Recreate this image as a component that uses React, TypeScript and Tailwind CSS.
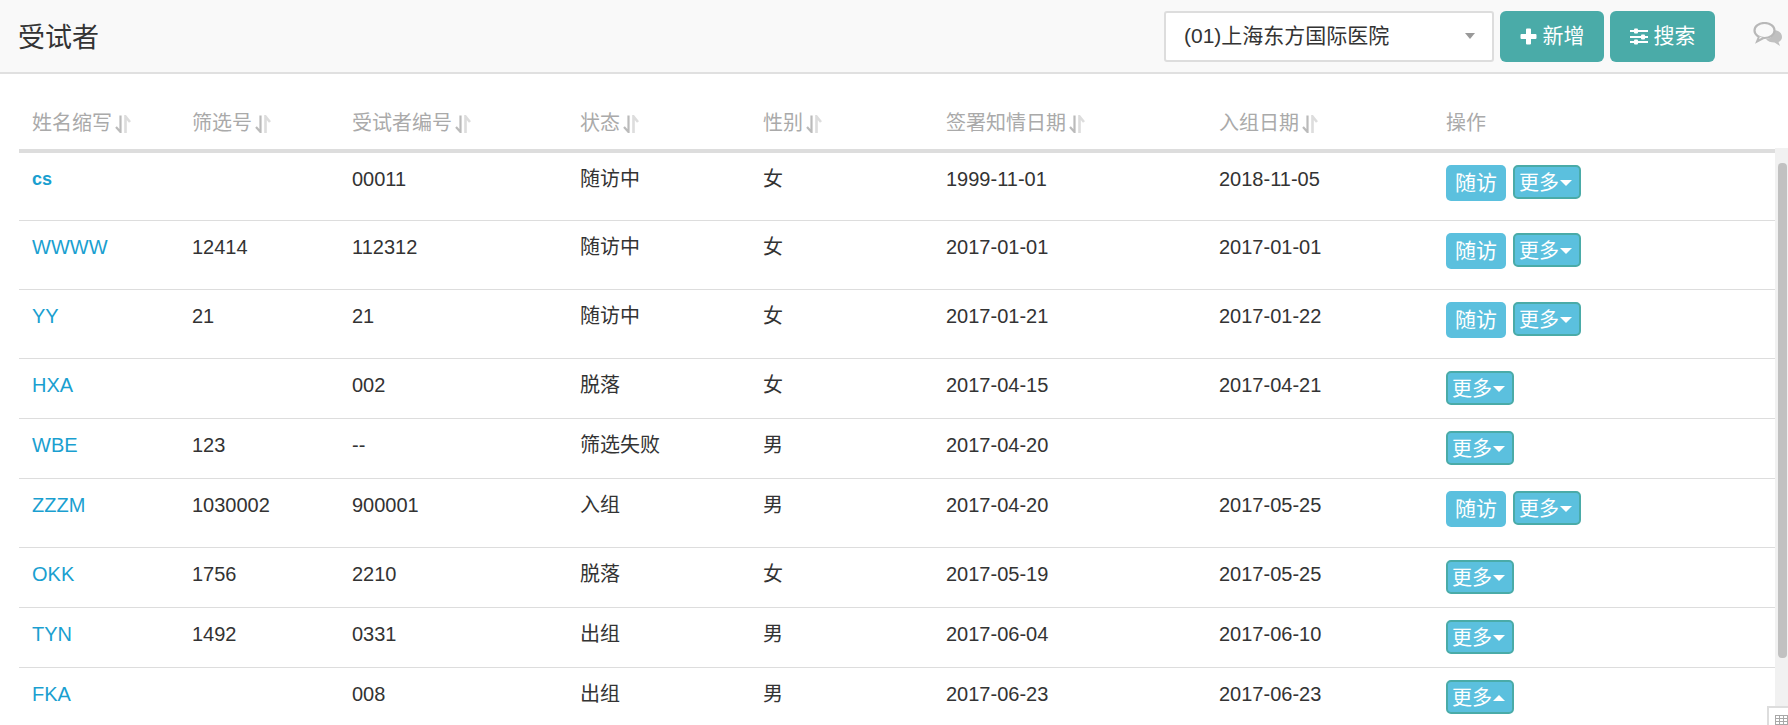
import React from "react";

function Sort() {
  return (
    <svg width="16" height="18" viewBox="0 0 16 18" className="ml-[3px] inline-block align-[-3px]">
      <path d="M5.500 0.500V17L1 12" stroke="#bbbbbb" strokeWidth="2.200" fill="none" />
      <path d="M10.500 18V1.500L15 7" stroke="#dddddd" strokeWidth="2.600" fill="none" />
    </svg>
  );
}

function Caret({ up }: { up?: boolean }) {
  return (
    <span
      className={
        up
          ? "inline-block w-0 h-0 ml-px border-x-[6px] border-x-transparent border-b-[6px] border-b-white"
          : "inline-block w-0 h-0 ml-px border-x-[6px] border-x-transparent border-t-[6px] border-t-white"
      }
    />
  );
}

type Row = {
  name: string;
  no: string;
  code: string;
  status: string;
  sex: string;
  sign: string;
  enroll: string;
  visit: boolean;
  up?: boolean;
  h: string;
};

const rows: Row[] = [
  { name: "cs", no: "", code: "00011", status: "随访中", sex: "女", sign: "1999-11-01", enroll: "2018-11-05", visit: true, h: "h-[69px]" },
  { name: "WWWW", no: "12414", code: "112312", status: "随访中", sex: "女", sign: "2017-01-01", enroll: "2017-01-01", visit: true, h: "h-[69px]" },
  { name: "YY", no: "21", code: "21", status: "随访中", sex: "女", sign: "2017-01-21", enroll: "2017-01-22", visit: true, h: "h-[69px]" },
  { name: "HXA", no: "", code: "002", status: "脱落", sex: "女", sign: "2017-04-15", enroll: "2017-04-21", visit: false, h: "h-[60px]" },
  { name: "WBE", no: "123", code: "--", status: "筛选失败", sex: "男", sign: "2017-04-20", enroll: "", visit: false, h: "h-[60px]" },
  { name: "ZZZM", no: "1030002", code: "900001", status: "入组", sex: "男", sign: "2017-04-20", enroll: "2017-05-25", visit: true, h: "h-[69px]" },
  { name: "OKK", no: "1756", code: "2210", status: "脱落", sex: "女", sign: "2017-05-19", enroll: "2017-05-25", visit: false, h: "h-[60px]" },
  { name: "TYN", no: "1492", code: "0331", status: "出组", sex: "男", sign: "2017-06-04", enroll: "2017-06-10", visit: false, h: "h-[60px]" },
  { name: "FKA", no: "", code: "008", status: "出组", sex: "男", sign: "2017-06-23", enroll: "2017-06-23", visit: false, up: true, h: "h-[60px]" },
];

const heads = [
  ["姓名缩写", "w-[160px]"],
  ["筛选号", "w-[160px]"],
  ["受试者编号", "w-[228px]"],
  ["状态", "w-[183px]"],
  ["性别", "w-[183px]"],
  ["签署知情日期", "w-[273px]"],
  ["入组日期", "w-[227px]"],
];

export default function App() {
  return (
    <div className="relative h-[725px] w-[1788px] overflow-hidden bg-white text-[20px] text-[#333] font-['Liberation_Sans','Noto_Sans_CJK_SC',sans-serif]">
      <header className="flex h-[74px] items-center border-b-2 border-[#e0e0e0] bg-[#f9f9f9] pl-[18px]">
        <h1 className="flex-1 pt-[5px] text-[27px] font-normal text-[#333]">受试者</h1>
        <div className="flex h-[51px] w-[330px] items-center justify-between rounded-[3px] border-2 border-[#ddd] bg-white pl-[18px] pr-[17px] text-[21px]">
          <span>(01)上海东方国际医院</span>
          <span className="h-0 w-0 border-x-[5px] border-t-[6px] border-x-transparent border-t-[#999]" />
        </div>
        <button className="ml-[6px] flex h-[51px] w-[104px] items-center justify-center gap-[6px] rounded-[6px] bg-[#4aaba8] text-[21px] text-white">
          <svg width="17" height="17" viewBox="0 0 17 17"><path d="M6 1.500a1 1 0 0 1 1-1h3a1 1 0 0 1 1 1V6h4.500a1 1 0 0 1 1 1v3a1 1 0 0 1-1 1H11v4.500a1 1 0 0 1-1 1H7a1 1 0 0 1-1-1V11H1.500a1 1 0 0 1-1-1V7a1 1 0 0 1 1-1H6z" fill="#fff" /></svg>
          新增
        </button>
        <button className="ml-[6px] flex h-[51px] w-[105px] items-center justify-center gap-[6px] rounded-[6px] bg-[#4aaba8] text-[21px] text-white">
          <svg width="18" height="17" viewBox="0 0 18 17" fill="#fff">
            <rect y="2" width="18" height="2" /><rect y="8" width="18" height="2" /><rect y="13" width="18" height="2" />
            <rect x="4" y="0.500" width="4" height="5" rx="1" /><rect x="11" y="6.500" width="4" height="5" rx="1" /><rect x="4" y="11.500" width="4" height="5" rx="1" />
          </svg>
          搜索
        </button>
        <div className="mb-[4px] ml-[38px] mr-[6px] flex w-[29px] justify-center">
          <svg width="29" height="24" viewBox="0 0 29 24">
            <path d="M20 8c4 0 9 2 9 7 0 2.500-1.500 4-3.500 5l1.500 4-5.500-3.500c-3.500 0-7-1-8.500-3.500 4 0 8-3 7-9z" fill="#c0c0c0" />
            <ellipse cx="11.500" cy="8.500" rx="10" ry="7.500" fill="#f9f9f9" stroke="#b8b8b8" strokeWidth="2.200" />
            <path d="M6 14.500 4 19.500 10.500 16" fill="#f9f9f9" stroke="#b8b8b8" strokeWidth="2" />
          </svg>
        </div>
      </header>

      <div className="pl-[19px] pr-[13px]">
        <table className="w-[1756px] table-fixed border-collapse">
          <thead>
            <tr className="h-[77px] border-b-4 border-[#ddd]">
              {heads.map(([t, w]) => (
                <th key={t} className={`${w} pl-[13px] pr-0 pt-[23px] text-left text-[20px] font-normal text-[#aaa]`}>
                  {t}
                  <Sort />
                </th>
              ))}
              <th className="pl-[13px] pr-0 pt-[23px] text-left text-[20px] font-normal text-[#aaa]">操作</th>
            </tr>
          </thead>
          <tbody>
            {rows.map((r) => (
              <tr key={r.name} className={`${r.h} border-b border-[#ddd]`}>
                <td className={r.name === "cs" ? "pl-[13px] pt-[10px] align-top text-[18px] font-bold leading-[32px] text-[#1a9fd0]" : "pl-[13px] pt-[10px] align-top leading-[32px] text-[#1a9fd0]"}>{r.name}</td>
                <td className="pl-[13px] pt-[10px] align-top leading-[32px]">{r.no}</td>
                <td className="pl-[13px] pt-[10px] align-top leading-[32px]">{r.code}</td>
                <td className="pl-[13px] pt-[10px] align-top leading-[32px]">{r.status}</td>
                <td className="pl-[13px] pt-[10px] align-top leading-[32px]">{r.sex}</td>
                <td className="pl-[13px] pt-[10px] align-top leading-[32px]">{r.sign}</td>
                <td className="pl-[13px] pt-[10px] align-top leading-[32px]">{r.enroll}</td>
                <td className="pl-[13px] pt-[12px] align-top">
                  <div className="flex items-start gap-[7px]">
                    {r.visit && (
                      <button className="flex h-[36px] w-[60px] items-center justify-center rounded-[5px] bg-[#5bc0de] text-[21px] text-white">
                        随访
                      </button>
                    )}
                    <button className="flex h-[34px] w-[68px] items-center justify-start rounded-[5px] border-2 border-[#4aaba8] bg-[#5bc0de] pl-[4px] pt-[2px] text-[20px] text-white">
                      更多
                      <Caret up={r.up} />
                    </button>
                  </div>
                </td>
              </tr>
            ))}
          </tbody>
        </table>
      </div>

      <div className="absolute right-0 top-[148px] h-[577px] w-[13px] bg-[#f1f1f1]">
        <div className="ml-[3px] mt-[15px] h-[495px] w-[9px] rounded-[4px] bg-[#c1c1c1]" />
      </div>
      <div className="absolute bottom-0 right-0 flex h-[19px] w-[21px] items-start border-l-2 border-t-2 border-[#ddd] bg-white pl-[6px] pt-[7px]">
        <svg width="13" height="10" viewBox="0 0 13 10" fill="#a8a8a8">
          <path d="M0 0h13v10H0zM1 1v2h3V1zm4 0v2h3V1zm4 0v2h3V1zM1 4v2h3V4zm4 0v2h3V4zm4 0v2h3V4zM1 7v2h3V7zm4 0v2h3V7zm4 0v2h3V7z" fillRule="evenodd" />
        </svg>
      </div>
    </div>
  );
}
